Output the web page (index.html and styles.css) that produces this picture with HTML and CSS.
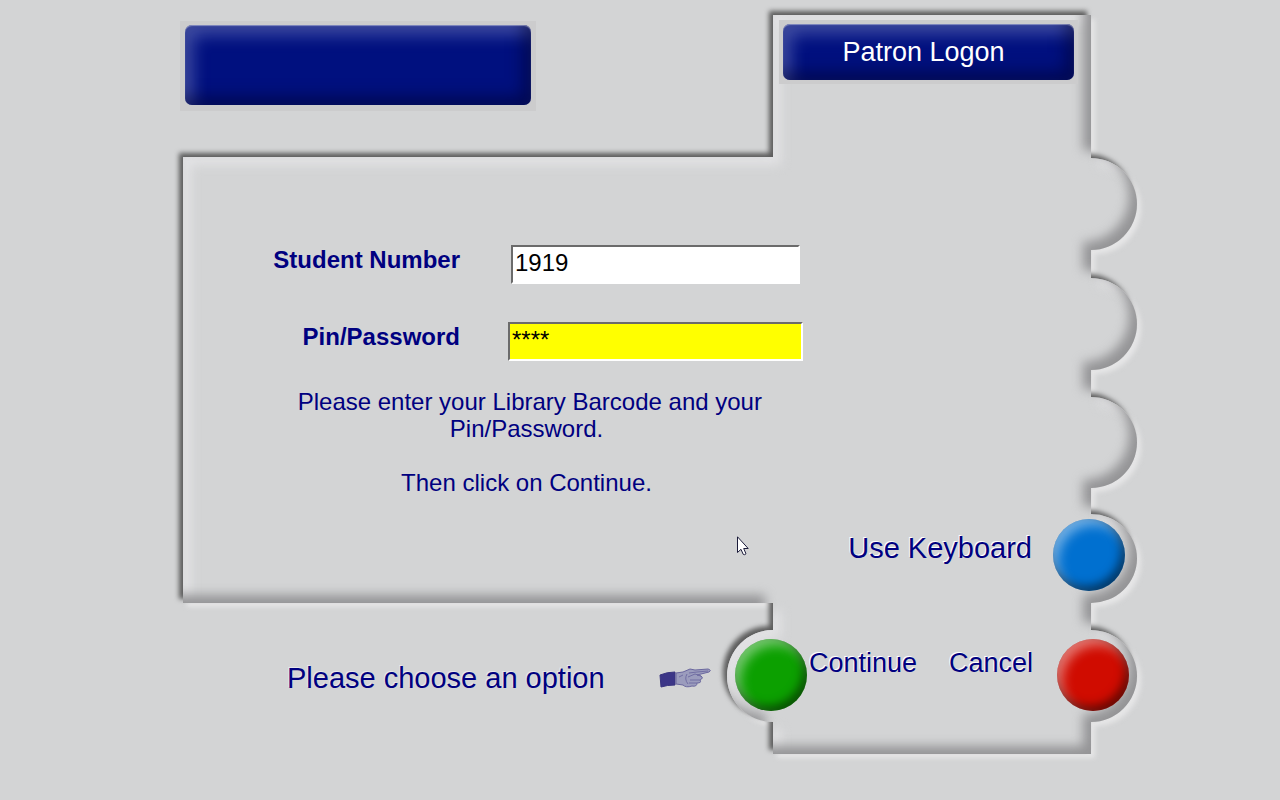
FILE: index.html
```html
<!DOCTYPE html>
<html lang="en">

<head>
    <meta charset="UTF-8">
    <meta name="viewport" content="width=device-width, initial-scale=1.0">
    <title>Patron Logon</title>
    <link rel="stylesheet" href="styles.css">
</head>

<body>
    <div class="kiosk">
        <!-- embossed panel behind everything -->
        <svg class="frame" viewBox="0 0 1280 800" preserveAspectRatio="none" aria-hidden="true">
            <defs>
                <path id="panel" d="M183 157H773V15H1091V158A46 46 0 0 1 1091 250V278A46 46 0 0 1 1091 370V397A46 45.5 0 0 1 1091 488V514A46 44.5 0 0 1 1091 603V630A46 46 0 0 1 1091 722V754H773V722A46 46 0 0 1 773 630V603H183Z" />
                <path id="outside" fill-rule="evenodd" d="M-50 -50H1330V850H-50ZM183 157H773V15H1091V158A46 46 0 0 1 1091 250V278A46 46 0 0 1 1091 370V397A46 45.5 0 0 1 1091 488V514A46 44.5 0 0 1 1091 603V630A46 46 0 0 1 1091 722V754H773V722A46 46 0 0 1 773 630V603H183Z" />
                <clipPath id="panel-clip">
                    <use href="#panel" />
                </clipPath>
                <filter id="blur-small" filterUnits="userSpaceOnUse" x="-60" y="-60" width="1400" height="920" color-interpolation-filters="sRGB">
                    <feGaussianBlur stdDeviation="2.5" />
                </filter>
                <filter id="blur-big" filterUnits="userSpaceOnUse" x="-60" y="-60" width="1400" height="920" color-interpolation-filters="sRGB">
                    <feGaussianBlur stdDeviation="5.5" />
                </filter>
            </defs>
            <!-- light falls from the top left -->
            <g filter="url(#blur-small)">
                <use href="#panel" x="4" y="4" fill="#e6e6e7" />
            </g>
            <g filter="url(#blur-small)">
                <use href="#panel" x="-4" y="-4" fill="#5c5c5c" />
            </g>
            <use href="#panel" fill="#d3d4d5" />
            <g clip-path="url(#panel-clip)">
                <g filter="url(#blur-big)">
                    <use href="#outside" x="8" y="8" fill="#e2e2e4" />
                </g>
                <g filter="url(#blur-big)">
                    <use href="#outside" x="-8" y="-8" fill="#949496" />
                </g>
            </g>
        </svg>

        <main class="screen">
            <div class="brand">
                <div class="plate"></div>
            </div>
            <div class="heading">
                <h1 class="plate plate-title">Patron Logon</h1>
            </div>

            <form id="logon" class="logon">
                <div class="fields">
                    <label for="student">Student Number</label>
                    <input id="student" class="field" type="text" value="1919">
                    <label for="pin">Pin/Password</label>
                    <input id="pin" class="field field-active" type="text" value="****" autocomplete="off">
                </div>
                <div class="help">
                    <p>&nbsp;Please enter your Library Barcode and your<br>Pin/Password.</p>
                    <p>Then click on Continue.</p>
                </div>
            </form>

            <div class="keyboard">
                <button class="option option-keyboard" type="button">
                    <span class="option-text">Use Keyboard</span>
                    <span class="orb orb-blue"></span>
                </button>
            </div>

            <div class="prompt">
                <span>Please choose an option</span>
                <svg class="hand" viewBox="0 0 52 24" aria-hidden="true">
                    <path d="M1 9Q8 6 16 6V19Q8 19 2 21Z" fill="#3c3687" stroke="#39347f" />
                    <path d="M17 7L24 6L31 3L36 4L49 3Q53 4 50 6L38 9L42 10Q45 12 41 14Q43 17 38 17Q38 21 33 20Q27 22 24 19L17 18Z" fill="#9b9cbd" stroke="#6a679e" />
                    <path d="M30 7L38 6L49 5M29 11L36 8L42 10M31 14L41 14M30 17L38 17M28 8Q25 13 29 18M24 9L20 11" fill="none" stroke="#716ea3" />
                </svg>
            </div>

            <div class="actions">
                <button class="option option-continue" type="submit" form="logon">
                    <span class="orb orb-green"></span>
                    <span class="option-text">Continue</span>
                </button>
                <button class="option" type="button">
                    <span class="option-text">Cancel</span>
                    <span class="orb orb-red"></span>
                </button>
            </div>
        </main>

        <svg class="pointer" viewBox="0 0 12 20" aria-hidden="true">
            <path d="M.5 .8V16.5L4 13.3L6.2 18.3Q7.5 19.3 9 17.8L6.7 12.5H11.2Z" fill="#fff" stroke="#1b1b3a" />
        </svg>
    </div>
</body>

</html>
```
FILE: styles.css
```css
* {
    box-sizing: border-box;
    margin: 0;
    padding: 0;
}

body {
    background: #d3d4d5;
    color: #000080;
    font-family: "Liberation Sans", Arial, sans-serif;
}

.kiosk {
    position: relative;
    min-height: 100vh;
    display: grid;
    overflow: hidden;
}

/* the frame and the screen share one cell */
.frame,
.screen {
    grid-area: 1 / 1;
    width: 100%;
}

.frame {
    height: 100%;
    min-height: 0;
}

.screen {
    z-index: 1;
    display: grid;
    grid-template-columns: 180fr 547fr 410fr 143fr;
    grid-template-rows: 156fr 358fr 89fr 197fr;
}

.screen > * {
    min-width: 0;
    min-height: 0;
}

.brand {
    grid-area: 1 / 2;
    padding-top: 21px;
}

.brand .plate {
    width: 65%;
    height: 90px;
    border-width: 4px 5px 6px;
}

.heading {
    grid-area: 1 / 3;
    padding: 20px 59px 0 52px;
}

.plate {
    border: 4px solid #cccccd;
    background: #cccccd;
    position: relative;
    display: flex;
    align-items: center;
    justify-content: center;
}

.plate::before {
    content: "";
    position: absolute;
    inset: 0;
    border-radius: 7px;
    background: #00107f;
    box-shadow: inset 0 1px 1px rgba(255, 255, 255, 0.4),
        inset -8px -8px 16px rgba(0, 0, 40, 0.5),
        inset 8px 10px 16px rgba(140, 150, 210, 0.45);
}

.plate-title {
    height: 64px;
    padding-right: 10px;
    color: #fff;
    font-size: 27px;
    font-weight: normal;
    isolation: isolate;
}

.plate-title::before {
    z-index: -1;
}

.logon {
    grid-area: 2 / 2 / 3 / 4;
    padding-top: 89px;
    font-size: 24px;
}

.fields {
    display: grid;
    grid-template-columns: 280px 295px;
    gap: 38px 48px;
}

.fields label {
    font-weight: bold;
    line-height: 30px;
    text-align: right;
}

.field {
    justify-self: center;
    width: 289px;
    height: 39px;
    padding: 0 2px 3px;
    border: 2px solid;
    border-color: #6b6b6b #fff #fff #6b6b6b;
    background: #fff;
    color: #000;
    font: inherit;
    outline: none;
}

.field-active {
    width: 295px;
    background: #ff0;
}

.help {
    width: 623px;
    margin-top: 27px;
    padding-left: 70px;
    line-height: 27px;
    text-align: center;
    white-space: nowrap;
}

.help p + p {
    margin-top: 27px;
}

.keyboard {
    grid-area: 3 / 3;
    display: flex;
    justify-content: flex-end;
    align-items: flex-start;
    padding: 5px 12px 0 0;
}

.prompt {
    grid-area: 4 / 2;
    display: flex;
    align-items: flex-start;
    gap: 54px;
    padding: 58px 0 0 107px;
    font-size: 29px;
    line-height: 34px;
    white-space: nowrap;
}

.hand {
    flex: none;
    width: 52px;
    height: 34px;
}

.actions {
    grid-area: 4 / 3;
    display: flex;
    align-items: flex-start;
    justify-content: space-between;
    padding: 36px 8px 0;
}

.option {
    display: flex;
    align-items: center;
    gap: 24px;
    border: none;
    background: none;
    color: inherit;
    font: inherit;
    cursor: pointer;
}

.option-continue {
    gap: 2px;
}

.option-text {
    padding-bottom: 24px;
    font-size: 27px;
    text-shadow: -1px -1px 0 #fff;
    white-space: nowrap;
}

.option-keyboard {
    gap: 21px;
}

.option-keyboard .option-text {
    padding-bottom: 14px;
    font-size: 29px;
}

.prompt span {
    text-shadow: -1px -1px 0 #e8e8ea;
}

.orb {
    width: 72px;
    height: 72px;
    border-radius: 50%;
    box-shadow: inset -4px -5px 10px rgba(0, 0, 0, 0.5),
        inset 5px 6px 12px rgba(255, 255, 255, 0.45);
}

.orb-blue {
    background: #0070d0;
}

.orb-green {
    background: #0ca000;
}

.orb-red {
    background: #d00c00;
}

.pointer {
    position: absolute;
    z-index: 2;
    left: 57.6%;
    top: 67%;
    width: 12px;
    height: 20px;
}
```
